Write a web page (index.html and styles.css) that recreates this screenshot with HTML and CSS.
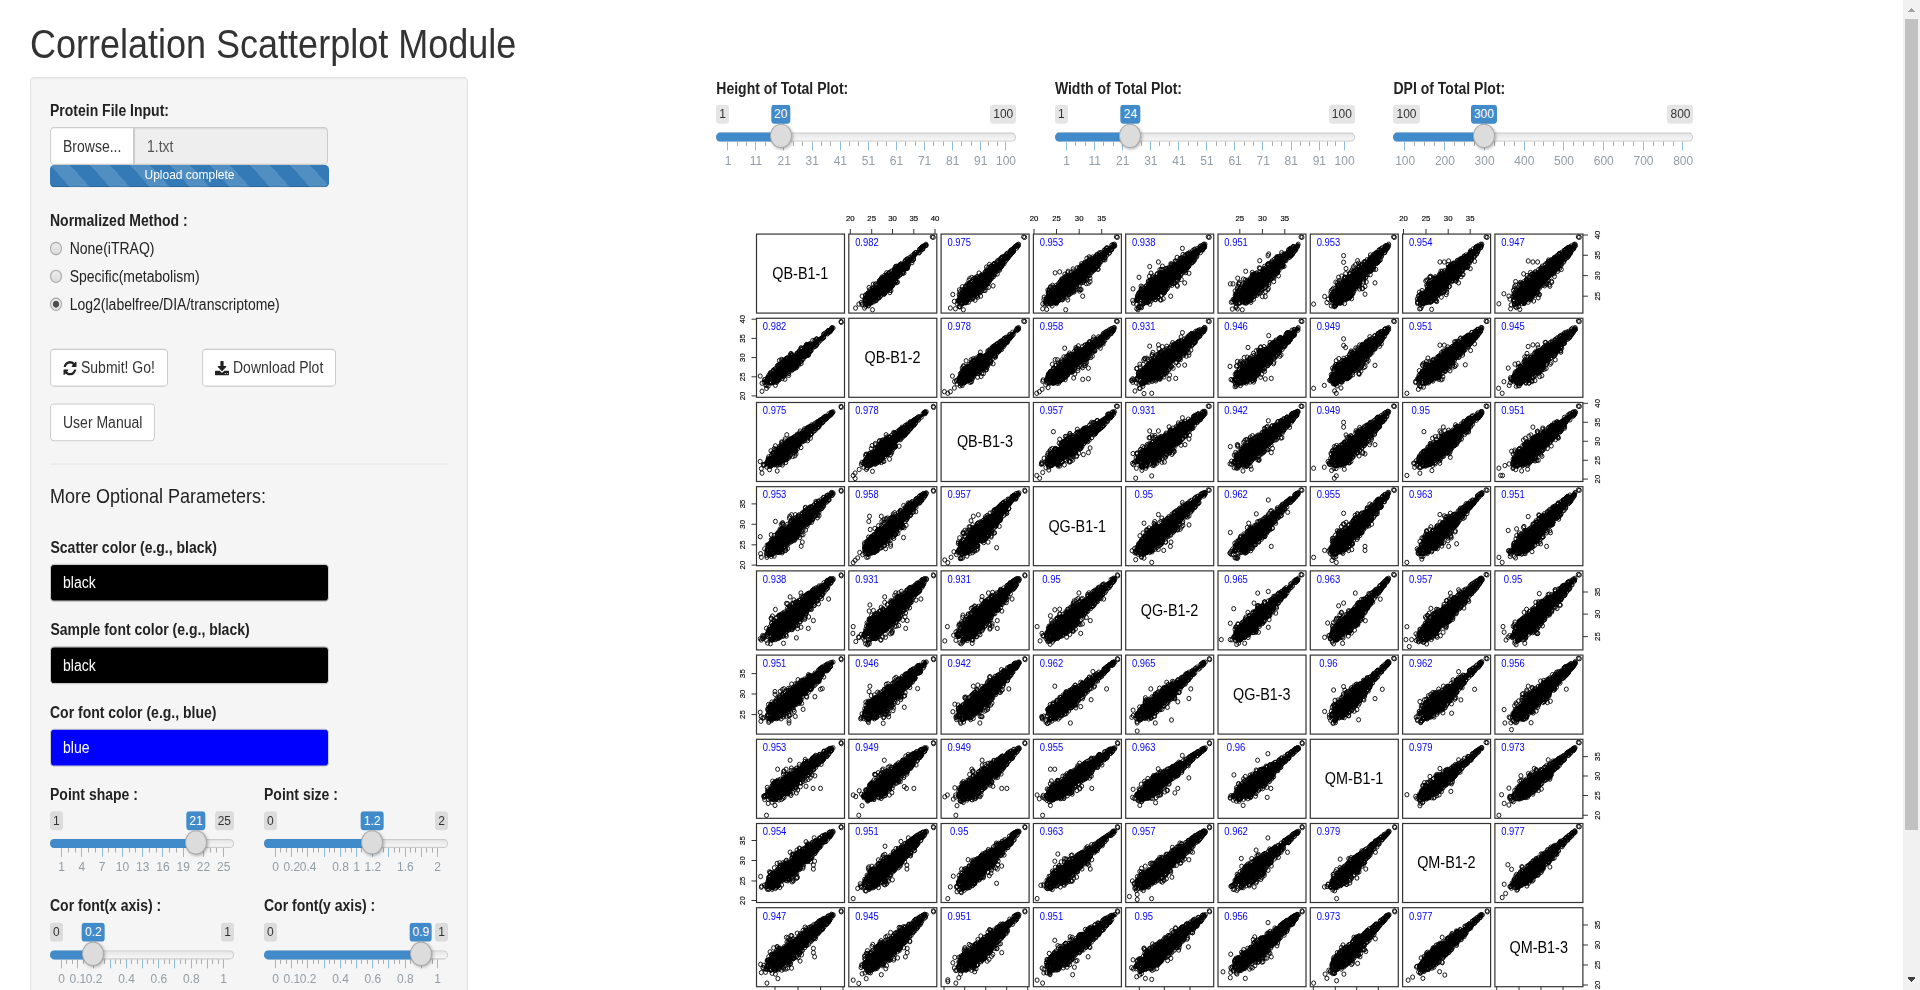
FILE: index.html
```html
<!DOCTYPE html>
<html lang="en">
<head>
<meta charset="utf-8">
<title>Correlation Scatterplot Module</title>
<link rel="stylesheet" href="styles.css">
</head>
<body>
<div class="viewport">
<div class="page">
  <h1 class="title">Correlation Scatterplot Module</h1>
  <div class="columns">
    <aside class="well">
      <span class="label">Protein File Input:</span>
      <div class="file-group">
        <span class="browse">Browse...</span>
        <span class="filename">1.txt</span>
      </div>
      <div class="progress">Upload complete</div>

      <span class="label">Normalized Method :</span>
      <div class="radios">
        <label class="radio"><i class="dot"></i>None(iTRAQ)</label>
        <label class="radio"><i class="dot"></i>Specific(metabolism)</label>
        <label class="radio"><i class="dot checked"></i>Log2(labelfree/DIA/transcriptome)</label>
      </div>

      <div class="buttons">
        <button class="btn submit"><svg class="icon" viewBox="0 0 1536 1536"><path transform="translate(0,1408) scale(1,-1)" d="M1511 480q0-5-1-7-64-268-268-434.5t-478-166.5q-146 0-282.5 55t-243.5 157l-129-129q-19-19-45-19t-45 19-19 45v448q0 26 19 45t45 19h448q26 0 45-19t19-45-19-45l-137-137q71-66 161-102t187-36q134 0 250 65t186 179q11 17 53 117 8 23 30 23h192q13 0 22.5-9.5t9.5-22.5zM1536 1280v-448q0-26-19-45t-45-19h-448q-26 0-45 19t-19 45 19 45l138 138q-148 137-349 137-134 0-250-65t-186-179q-11-17-53-117-8-23-30-23h-199q-13 0-22.5 9.5t-9.5 22.5v7q65 268 270 434.5t480 166.5q146 0 284-55.5t245-156.5l130 129q19 19 45 19t45-19 19-45z"/></svg>Submit! Go!</button>
        <button class="btn download"><svg class="icon" viewBox="0 0 1664 1536"><path transform="translate(0,1536) scale(1,-1)" d="M1280 192q0 26-19 45t-45 19-45-19-19-45 19-45 45-19 45 19 19 45zM1536 192q0 26-19 45t-45 19-45-19-19-45 19-45 45-19 45 19 19 45zM1664 416v-320q0-40-28-68t-68-28h-1472q-40 0-68 28t-28 68v320q0 40 28 68t68 28h465l135-136q58-56 136-56t136 56l136 136h464q40 0 68-28t28-68zM1339 985q17-41-14-70l-448-448q-18-19-45-19t-45 19l-448 448q-31 29-14 70 17 39 59 39h256v448q0 26 19 45t45 19h256q26 0 45-19t19-45v-448h256q42 0 59-39z"/></svg>Download Plot</button>
        <button class="btn manual">User Manual</button>
      </div>

      <hr class="rule">
      <h4 class="subtitle">More Optional Parameters:</h4>

      <span class="label indent">Scatter color (e.g., black)</span>
      <div class="color-input black">black</div>
      <span class="label indent">Sample font color (e.g., black)</span>
      <div class="color-input black">black</div>
      <span class="label">Cor font color (e.g., blue)</span>
      <div class="color-input blue">blue</div>

      <div class="slider-grid" id="side-sliders"></div>
    </aside>
    <main class="main">
      <div class="top-sliders" id="top-sliders"></div>
      <svg class="plot" id="plot" viewBox="720 200 900 790" preserveAspectRatio="none"></svg>
    </main>
  </div>
</div>
<div class="scrollbar">
  <svg class="arrow" viewBox="0 0 17 19"><path d="M5 12h7v-1h-1v-1h-1v-1h-1v-1h-1v1h-1v1h-1v1h-1z" fill="#a3a3a3"/></svg>
  <div class="thumb"></div>
  <svg class="arrow" viewBox="0 0 17 19"><path d="M5 6h7v2h-1v1h-1v1h-1v1h-1v-1h-1v-1h-1v-1h-1z" fill="#404040"/></svg>
</div>
</div>
<script src="app.js"></script>
</body>
</html>
```
FILE: styles.css
```css
* { box-sizing: border-box; }
body {
  margin: 0;
  background: #fff;
  color: #222;
  font: 14px/20px "Liberation Sans", Arial, sans-serif;
  overflow: hidden;
}
.viewport { display: flex; width: 1920px; height: 990px; overflow: hidden; }
.page {
  flex: none;
  width: 1903px;
  height: 888.5px;
  padding: 20px 0 0 30px;
  overflow: hidden;
  transform: scaleY(1.1143);
  transform-origin: 0 0;
}
.title { margin: 0 0 9.5px; font-size: 36px; line-height: 39.6px; font-weight: 400; color: #333; }
.columns { display: flex; align-items: flex-start; }
.well {
  flex: none;
  width: 438px;
  height: 900px;
  padding: 19px 19px 0;
  background: #f5f5f5;
  border: 1px solid #e3e3e3;
  border-radius: 4px;
  box-shadow: inset 0 1px 1px rgba(0, 0, 0, .05);
}
.label { display: block; margin-bottom: 5px; font-weight: 700; white-space: nowrap; }
.label.indent { padding-left: .5px; }

.file-group { display: flex; width: 278px; height: 34px; }
.browse {
  width: 84px;
  padding: 6px 12px;
  color: #333;
  background: #fff;
  border: 1px solid #ccc;
  border-radius: 4px 0 0 4px;
}
.filename {
  flex: 1;
  padding: 6px 12px;
  color: #555;
  background: #eee;
  border: 1px solid #ccc;
  border-radius: 0 4px 4px 0;
  box-shadow: inset 0 1px 1px rgba(0, 0, 0, .075);
}
.progress {
  width: 279px;
  height: 20px;
  margin-bottom: 20px;
  border-radius: 4px;
  color: #fff;
  font-size: 12px;
  line-height: 19px;
  text-align: center;
  background: linear-gradient(45deg, rgba(255,255,255,.15) 25%, transparent 25%, transparent 50%, rgba(255,255,255,.15) 50%, rgba(255,255,255,.15) 75%, transparent 75%) 0 0 / 40px 40px #337ab7;
  box-shadow: inset 0 -1px 0 rgba(0, 0, 0, .15);
}
.radios { display: flex; flex-direction: column; gap: 5px; margin-bottom: 30px; }
.radio { display: flex; align-items: center; gap: 7.7px; height: 20px; }
.dot {
  width: 12px;
  height: 12px;
  border: 1px solid #a6a6a6;
  border-radius: 50%;
  background: linear-gradient(#ececec, #dcdcdc);
}
.dot.checked { background: radial-gradient(circle, #4d4d4d 2.8px, #e6e6e6 3.4px); }

.buttons { display: flex; flex-wrap: wrap; gap: 15.2px 34px; }
.btn {
  display: flex;
  align-items: center;
  height: 34px;
  padding: 0 0 0 12px;
  border: 1px solid #ccc;
  border-radius: 4px;
  background: #fff;
  color: #333;
  font: inherit;
  white-space: nowrap;
}
.icon { flex: none; width: 14px; height: 13px; margin-right: 4px; fill: #222; }
.submit { width: 118px; }
.download { width: 134px; }
.manual { width: 105px; }
.rule { margin: 20px 0 19.2px; border: 0; border-top: 1px solid #e9e9e9; }
.subtitle { margin: 0 0 24.8px; font-size: 18px; line-height: 19.8px; font-weight: 400; }
.color-input {
  width: 278.5px;
  height: 34px;
  margin-bottom: 15px;
  padding: 6px 12px;
  border: 1px solid #ccc;
  border-radius: 4px;
  color: #fff;
}
.black { background: #000; }
.blue { background: #00f; }

.slider-grid { display: grid; grid-template-columns: 184px 184px; column-gap: 30px; row-gap: 15px; }
.main { width: 980px; margin-left: 248.3px; }
.top-sliders { display: grid; grid-template-columns: repeat(3, 300px); column-gap: 38.6px; height: 111px; }

.irs { position: relative; height: 60.2px; font-size: 12px; line-height: 15px; }
.irs span, .irs i { position: absolute; white-space: nowrap; }
.bound, .value { top: 0; height: 17px; padding: 1px 3px; border-radius: 3px; }
.bound { background: rgba(0, 0, 0, .1); color: #333; }
.bound.max { right: 0; }
.value { transform: translateX(-50%); background: #428bca; color: #fff; }
.track {
  top: 25px;
  left: 0;
  right: 0;
  height: 8px;
  border: 1px solid #ccc;
  border-radius: 8px;
  background: linear-gradient(to bottom, #dedede -50%, #fff 150%);
}
.bar { top: 25px; left: 0; height: 8px; border-radius: 8px 0 0 8px; background: #428bca; }
.handle {
  top: 17px;
  width: 22px;
  height: 22px;
  margin-left: -11px;
  border: 1px solid #aaa;
  border-radius: 50%;
  background: #dcdcdc;
  box-shadow: 1px 1px 3px rgba(0, 0, 0, .3);
}
.tick { top: 33px; width: 1px; height: 8px; background: #8fbbe0; }
.tick.minor { height: 4px; background: #aaa; }
.num { top: 42.8px; transform: translateX(-50%); color: #929da6; }

.plot { display: block; width: 900px; height: 709px; margin-left: 3.7px; }
.plot text { font-family: "Liberation Sans", Arial, sans-serif; text-anchor: middle; }
.frame { fill: none; stroke: #333; stroke-width: 1.2; }
.cloud { fill: #000; stroke: #000; stroke-width: 1.5; stroke-linejoin: round; }
.pts { fill: none; stroke: #000; stroke-width: .9; }
.axis { stroke: #333; stroke-width: 1; }
.cor { font-size: 11px; fill: #00f; }
.sample { font-size: 16px; fill: #000; }
.axis-num { font-size: 7.8px; fill: #000; stroke: #000; stroke-width: .15; }

.scrollbar { display: flex; flex-direction: column; flex: none; width: 17px; height: 990px; background: #f1f1f1; }
.arrow { width: 17px; height: 19px; flex: none; }
.thumb { width: 13px; height: 811px; margin: 0 2px 141px; background: #c1c1c1; }
```
FILE: app.js
```js
/* ---- sliders ---- */
const STEP10 = [1, 11, 21, 31, 41, 51, 61, 71, 81, 91, 100];
const tenths = m => Array.from({ length: 11 }, (_, i) => +(i * m).toFixed(1));

function slider(host, o) {
  const span = o.width - 22;
  const pos = v => 11 + (v - o.min) / (o.max - o.min) * span;
  let h = `<div><span class="label">${o.label}</span><div class="irs"><i class="track"></i>`;
  h += `<i class="bar" style="width:${pos(o.value)}px"></i>`;
  o.ticks.forEach((t, i) => {
    h += `<i class="tick" style="left:${pos(t)}px"></i>`;
    if (!o.hide || !o.hide.includes(i)) h += `<span class="num" style="left:${pos(t) + .7}px">${t}</span>`;
    const next = o.ticks[i + 1];
    if (next !== undefined) for (let k = 1; k <= o.minor; k++)
      h += `<i class="tick minor" style="left:${pos(t + (next - t) * k / (o.minor + 1))}px"></i>`;
  });
  h += `<span class="bound">${o.min}</span><span class="bound max">${o.max}</span>`;
  h += `<span class="value" style="left:${pos(o.value)}px">${o.value}</span>`;
  h += `<i class="handle" style="left:${pos(o.value)}px"></i></div></div>`;
  host.insertAdjacentHTML('beforeend', h);
}
const top3 = document.getElementById('top-sliders');
slider(top3, { label: 'Height of Total Plot:', width: 300, min: 1, max: 100, value: 20, ticks: STEP10, minor: 2 });
slider(top3, { label: 'Width of Total Plot:', width: 300, min: 1, max: 100, value: 24, ticks: STEP10, minor: 2 });
slider(top3, { label: 'DPI of Total Plot:', width: 300, min: 100, max: 800, value: 300, ticks: [100, 200, 300, 400, 500, 600, 700, 800], minor: 3 });
const side = document.getElementById('side-sliders');
slider(side, { label: 'Point shape :', width: 184, min: 1, max: 25, value: 21, ticks: [1, 4, 7, 10, 13, 16, 19, 22, 25], minor: 2 });
slider(side, { label: 'Point size :', width: 184, min: 0, max: 2, value: 1.2, ticks: tenths(.2), minor: 2, hide: [3, 7, 9] });
slider(side, { label: 'Cor font(x axis) :', width: 184, min: 0, max: 1, value: .2, ticks: tenths(.1), minor: 2, hide: [3, 5, 7, 9] });
slider(side, { label: 'Cor font(y axis) :', width: 184, min: 0, max: 1, value: .9, ticks: tenths(.1), minor: 2, hide: [3, 5, 7, 9] });

/* ---- scatterplot matrix ---- */
const NAMES = ['QB-B1-1', 'QB-B1-2', 'QB-B1-3', 'QG-B1-1', 'QG-B1-2', 'QG-B1-3', 'QM-B1-1', 'QM-B1-2', 'QM-B1-3'];
const COR = [
  [.982, .975, .953, .938, .951, .953, .954, .947],
  [.978, .958, .931, .946, .949, .951, .945],
  [.957, .931, .942, .949, .95, .951],
  [.95, .962, .955, .963, .951],
  [.965, .963, .957, .95],
  [.96, .962, .956],
  [.979, .973],
  [.977]
];
/* where each sample's values begin and end, as a fraction of its panel */
const LO = [.14, .20, .22, .17, .15, .21, .26, .21, .23];
const HI = [.865, .875, .88, .92, .90, .91, .89, .90, .91];
const PEAK = [.96, .96, .95, .955, .95, .955, .957, .96, .96];
/* isolated points, keyed by row,column, on a 264 x 238 panel */
const FAR = {
  '0,1': [20,223,47,223,71,228,30,211,40,187,113,117,123,170,55,212],
  '0,2': [28,223,43,225,67,228,35,182,55,168,156,156,132,170,145,92,48,210],
  '0,3': [28,210,28,225,40,227,97,228,148,187,65,117,79,114,104,112,165,148,170,143,32,190,52,160],
  '0,4': [33,225,37,228,22,165,40,130,98,84,170,43,190,118,177,147,155,157,135,187,72,98],
  '0,5': [43,226,73,228,37,150,45,150,59,133,83,112,125,80,152,60,167,143,133,188,142,188,150,65],
  '0,6': [10,211,100,65,100,85,107,104,142,80,164,158,164,181,194,147,43,188,85,130],
  '0,7': [51,225,87,227,112,84,125,84,138,81,168,147,203,104,216,82,47,187,82,130],
  '0,8': [12,210,47,225,75,227,27,180,42,187,100,81,114,84,128,84,165,157,62,143,86,120],
  '1,2': [10,221,20,226,28,221,34,174,75,128,118,102,156,137,120,175,90,190,40,210],
  '1,3': [10,226,18,221,26,214,94,90,135,83,148,184,165,182,165,150,121,180,65,125,72,125],
  '1,4': [28,219,55,227,78,226,32,195,150,181,130,183,177,141,190,111,72,84,98,80,170,43],
  '1,5': [90,88,152,52,142,183,160,181,36,145,58,130,85,195,52,198,104,187,168,132],
  '1,6': [10,211,100,62,100,82,106,88,194,142,73,219,78,226,92,210,42,202,146,166],
  '1,7': [13,226,47,214,51,203,112,81,125,81,76,120,59,140,188,140,204,97,216,77],
  '1,8': [11,211,22,226,27,191,43,202,100,85,114,80,128,80,40,150,60,138,141,173],
  '2,3': [10,220,19,228,28,211,60,88,79,111,165,151,93,188,150,157,170,137,32,168,52,142],
  '2,4': [30,228,32,198,78,221,60,198,22,154,72,86,98,86,170,46,178,127,190,110],
  '2,5': [37,133,58,127,83,112,151,55,160,151,192,106,100,201,75,206,54,195],
  '2,6': [10,198,100,60,100,74,107,98,194,127,72,228,78,221,42,195,102,201,164,155,64,205],
  '2,7': [13,220,36,195,52,213,64,88,112,86,122,74,98,103,88,205,143,165,162,126],
  '2,8': [12,198,17,220,23,220,114,74,128,87,108,98,80,206,98,201,30,190,50,147],
  '3,4': [30,220,55,215,78,228,32,200,114,192,134,180,136,167,190,115,98,84,170,48,55,110],
  '3,5': [151,40,115,82,160,180,37,138,60,210,36,200,209,77,92,110],
  '3,6': [10,213,78,228,43,192,100,80,164,180,164,192,58,190,150,140,65,222],
  '3,7': [13,228,112,84,125,88,162,172,138,180,56,210,52,165,143,80],
  '3,8': [12,213,22,228,43,193,46,210,155,180,40,132,65,127,100,90,137,172],
  '4,5': [10,207,37,207,47,114,119,67,151,62,108,97,173,127,151,170,37,158,80,218],
  '4,6': [135,67,100,97,43,200,52,157,85,105,97,218,165,150,210,85],
  '4,7': [13,168,10,207,27,207,20,228,143,67,168,57,85,113,40,190,72,220],
  '8,4': [33,208,59,213,78,216,188,118,201,75,22,157],
  '5,6': [216,103,194,131,100,95,70,105,43,170,145,195],
  '5,7': [216,103,168,50,140,130,175,135,52,140,147,175],
  '8,5': [15,193,37,211,82,213,150,45,160,148,38,140,110,88,38,195],
  '6,7': [13,167,145,157,82,112,112,88,52,200,50,182,168,62],
  '6,8': [12,229,20,167,28,193,42,198,42,147,78,110,160,62,165,120,118,88],
  '7,8': [22,223,32,211,28,183,39,124,50,138,165,131,115,170,45,190]
};
const X0 = 756.5, Y0 = 233.5, PX = 92.3, PY = 84.2, W = 88, H = 79;

function rng(seed) {
  let s = seed;
  return () => { s |= 0; s = s + 0x6D2B79F5 | 0; let t = Math.imul(s ^ s >>> 15, 1 | s);
    t = t + Math.imul(t ^ t >>> 7, 61 | t) ^ t; return ((t ^ t >>> 14) >>> 0) / 4294967296; };
}
const WIDE = [[0, .25], [.08, .75], [.18, 1], [.34, 1], [.5, .84], [.7, .6], [.88, .36], [1, .12]];
const TIGHT = [[0, .25], [.08, .75], [.18, 1], [.34, 1], [.5, .72], [.7, .38], [.88, .18], [1, .1]];
function width(t, shape) {
  for (let i = 1; i < shape.length; i++) if (t <= shape[i][0]) {
    const [a, p] = shape[i - 1], [b, q] = shape[i];
    return Math.max(.1, p + (q - p) * (t - a) / (b - a));
  }
  return .12;
}
/* point cloud of samples a (row) and b (column), a < b, in 0..1 with y up */
function cloud(a, b) {
  const r = COR[a][b - a - 1], rand = rng(a * 31 + b * 7 + 5);
  const shape = r >= .96 ? TIGHT : WIDE;
  const w = .078 + (.982 - r) * .8;
  const at = (t, d) => [LO[b] + (HI[b] - LO[b]) * t - d * .7, LO[a] + (HI[a] - LO[a]) * t + d * .7];
  const poly = [], pts = [];
  for (let k = 1; k <= 24; k++) poly.push(at(k / 24, w * width(k / 24, shape) * (.74 + rand() * .2)));
  for (let k = 24; k >= 1; k--) poly.push(at(k / 24, -w * width(k / 24, shape) * (.74 + rand() * .2)));
  for (let k = 0; k < 170; k++) {
    const t = Math.pow(rand(), 1.25), s = rand() < .5 ? 1 : -1;
    pts.push(at(t, s * w * width(t, shape) * (.7 + rand() * .35)));
  }
  for (let k = 0; k < 40; k++) {
    const t = Math.pow(rand(), 1.8) * .8, s = rand() < .5 ? 1 : -1;
    pts.push(at(t, s * w * width(t, shape) * (1 + rand() * .5)));
  }
  for (let k = 0; k < 9; k++) pts.push(at(-rand() * .06, (rand() - .5) * w * 1.4));
  pts.push([PEAK[b], PEAK[a]], [PEAK[b] - .012, PEAK[a] + .004], at(1.005, .003), at(.99, -.004));
  const up = FAR[a + ',' + b], low = FAR[b + ',' + a];
  if (up) for (let k = 0; k < up.length; k += 2) pts.push([up[k] / 264, 1 - up[k + 1] / 238]);
  if (low) for (let k = 0; k < low.length; k += 2) pts.push([1 - low[k + 1] / 238, low[k] / 264]);
  return { poly, pts };
}
const f = n => n.toFixed(1);
let out = '';
for (let i = 0; i < 9; i++) for (let j = 0; j < 9; j++) {
  const x = X0 + j * PX, y = Y0 + i * PY;
  if (i === j) {
    out += `<text class="sample" x="${f(x + 43.8)}" y="${f(y + 45)}" textLength="${i < 3 ? 56 : i < 6 ? 57.5 : 58.5}" lengthAdjust="spacingAndGlyphs">${NAMES[i]}</text>`;
  } else {
    const a = Math.min(i, j), b = Math.max(i, j), c = cloud(a, b);
    const map = p => { const u = i < j ? p : [p[1], p[0]]; return [x + u[0] * W, y + H - u[1] * H]; };
    out += `<path class="cloud" d="M${c.poly.map(p => map(p).map(f).join(' ')).join('L')}Z"/>`;
    out += `<path class="pts" d="${c.pts.map(p => { const [u, v] = map(p); return `M${f(u - 2)} ${f(v)}a2 2.2 0 1 0 4 0a2 2.2 0 1 0 -4 0`; }).join('')}"/>`;
    const r = COR[a][b - a - 1];
    out += `<text class="cor" x="${f(x + 18.1)}" y="${f(y + 11.8)}" textLength="${String(r).length > 4 ? 23.5 : 18.5}" lengthAdjust="spacingAndGlyphs">${r}</text>`;
  }
  out += `<rect class="frame" x="${f(x)}" y="${f(y)}" width="${W}" height="${H}"/>`;
}
const TOP = { 1: [[850.3, 20], [871.7, 25], [892.5, 30], [913.8, 35], [935, 40]], 3: [[1034, 20], [1056.5, 25], [1079.2, 30], [1101.7, 35]],
  5: [[1239.8, 25], [1262.4, 30], [1284.8, 35]], 7: [[1403.5, 20], [1426, 25], [1448.2, 30], [1470.2, 35]] };
for (const k in TOP) for (const [x, v] of TOP[k])
  out += `<path class="axis" d="M${x} 228.5V233.5"/><text class="axis-num" x="${x}" y="220.6">${v}</text>`;
const LEFT = [[318.6, 40], [337.8, 35], [357, 30], [376.2, 25], [395.3, 20], [503.3, 35], [523.7, 30], [544.2, 25], [564.5, 20],
  [673, 35], [693.4, 30], [714, 25], [840, 35], [860, 30], [880.3, 25], [900, 20]];
for (const [y, v] of LEFT)
  out += `<path class="axis" d="M751.5 ${y}H756.5"/><text class="axis-num" transform="translate(745.4 ${y}) rotate(-90)">${v}</text>`;
const RIGHT = [[234.3, 40], [254.7, 35], [275, 30], [295.6, 25], [402.7, 40], [421.7, 35], [440.7, 30], [459.7, 25], [478.5, 20],
  [591.4, 35], [613.5, 30], [636, 25], [756, 35], [775.5, 30], [795, 25], [814.7, 20], [924.3, 35], [944.3, 30], [964.3, 25], [984.3, 20]];
for (const [y, v] of RIGHT)
  out += `<path class="axis" d="M1582.9 ${y}h5"/><text class="axis-num" transform="translate(1600 ${y}) rotate(-90)">${v}</text>`;
for (const x of [775, 798, 820.6, 843, 944, 964.7, 985.7, 1006.7, 1027.7, 1139.3, 1164.3, 1190, 1313.3, 1335.3, 1356.7, 1378.3, 1496.7, 1519, 1541, 1563])
  out += `<path class="axis" d="M${x} 986V991"/>`;
document.getElementById('plot').innerHTML = out;
```
